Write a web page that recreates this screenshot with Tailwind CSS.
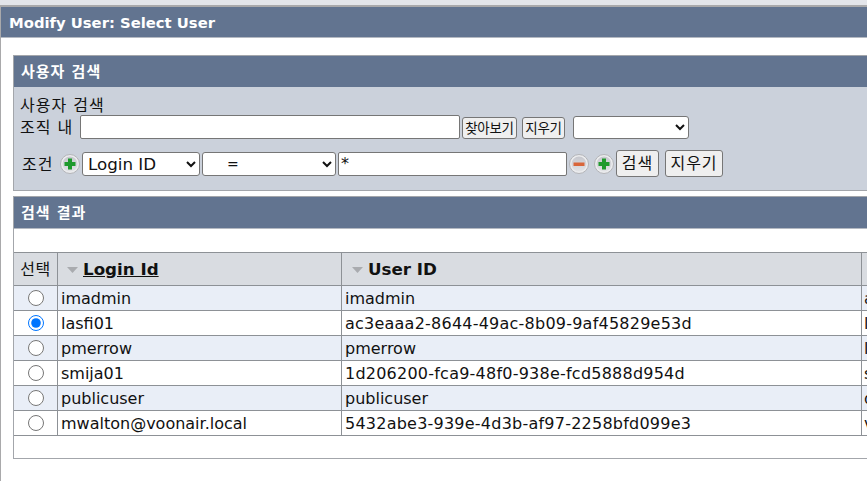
<!DOCTYPE html>
<html lang="ko">
<head>
<meta charset="utf-8">
<script src="https://cdn.jsdelivr.net/npm/@tailwindcss/browser@4"></script>
</head>
<body class="bg-white">
<div class="w-[867px] h-[481px] overflow-hidden bg-white text-[16px] leading-[19px] text-[#111] font-['DejaVu_Sans','Noto_Sans_CJK_KR',sans-serif]">
  <div class="h-[5px] bg-[#e3e5ea]"></div>
  <div class="w-[1000px] h-[476px] border-l border-t-2 border-[#a9a9ab] border-l-[#a9a9ab]">
    <div class="h-[31px] bg-[#627490] border-b border-[#b4b9c2] pl-2 pt-[1px] flex items-center text-white font-bold text-[14.800px]">Modify User: Select User</div>
    <div class="pl-3 pt-[17px]">
      <div class="border border-[#a3a6ab] border-r-0">
        <div class="h-[31px] bg-[#627490] pl-[7px] pt-[1px] flex items-center text-white font-bold text-[15px] tracking-[1px]">사용자 검색</div>
        <div class="h-[103px] bg-[#cbd1db] pl-[6px] pt-[8px]">
          <div class="text-[16px] leading-[20px] tracking-[1px] pt-[1px] h-[20px]">사용자 검색</div>
          <div class="flex items-center h-[24px]">
            <span class="text-[16px] tracking-[1px] w-[60px]">조직 내</span>
            <input type="text" class="w-[380px] h-[24px] bg-white border border-[#767676] rounded-[2px]">
            <button class="ml-[2px] mt-[2px] w-[55px] h-[22px] text-[13.500px] tracking-[-0.300px] bg-[#efefef] border border-[#767676] rounded-[3px]">찾아보기</button>
            <button class="ml-[5px] mt-[2px] w-[43px] h-[22px] text-[13.500px] tracking-[-0.300px] bg-[#efefef] border border-[#767676] rounded-[3px]">지우기</button>
            <select class="ml-[8px] w-[116px] h-[23px] bg-white border border-[#767676] rounded-[3px]"><option></option></select>
          </div>
          <div class="flex items-center h-[27px] mt-[11px]">
            <span class="text-[16px] tracking-[1px] w-[40px] pl-[2px] pt-[2px]">조건</span>
            <svg class="w-[20px] h-[20px] mr-[2px] mt-[1px]" viewBox="0 0 20 20"><defs><linearGradient id="g" x1="0" y1="0" x2="0" y2="1"><stop offset="0" stop-color="#c6c7cd"/><stop offset="1" stop-color="#e2e3e6"/></linearGradient></defs><circle cx="10" cy="10" r="9.500" fill="#ebecee" stroke="#b3b4b8"/><circle cx="10" cy="10" r="7.500" fill="url(#g)"/><path d="M8 4.500h4v3.500h3.500v4h-3.500v3.500h-4v-3.500h-3.500v-4h3.500z" fill="#1f9a2d"/></svg>
            <select class="w-[118px] h-[24px] pl-[1px] bg-white border border-[#767676] rounded-[3px] text-[16.700px]"><option>Login ID</option></select>
            <select class="ml-[2px] w-[134px] h-[24px] pl-[20px] bg-white border border-[#767676] rounded-[3px] text-[14px]"><option>=</option></select>
            <input type="text" value="*" class="ml-[2px] w-[229px] h-[24px] px-[2px] bg-white border border-[#767676] rounded-[2px] text-[16px]">
            <svg class="ml-[2px] w-[20px] h-[20px] mt-[1px]" viewBox="0 0 20 20"><circle cx="10" cy="10" r="9.500" fill="#ebecee" stroke="#b3b4b8"/><circle cx="10" cy="10" r="7.500" fill="url(#g)"/><rect x="4.500" y="8.500" width="11" height="3.500" fill="#d9663a"/></svg>
            <svg class="ml-[5px] w-[20px] h-[20px] mt-[1px]" viewBox="0 0 20 20"><circle cx="10" cy="10" r="9.500" fill="#ebecee" stroke="#b3b4b8"/><circle cx="10" cy="10" r="7.500" fill="url(#g)"/><path d="M8 4.500h4v3.500h3.500v4h-3.500v3.500h-4v-3.500h-3.500v-4h3.500z" fill="#1f9a2d"/></svg>
            <button class="ml-[2px] w-[43px] h-[27px] bg-[#efefef] border border-[#767676] rounded-[3px] text-[16px] tracking-[1px]">검색</button>
            <button class="ml-[6px] w-[58px] h-[27px] bg-[#efefef] border border-[#767676] rounded-[3px] text-[16px] tracking-[1px]">지우기</button>
          </div>
        </div>
      </div>
      <div class="mt-[5px] border border-[#a3a6ab] border-r-0 h-[263px]">
        <div class="h-[32px] bg-[#627490] border-b border-[#b4b9c2] pl-[7px] pt-[1px] flex items-center text-white font-bold text-[15px] tracking-[1px]">검색 결과</div>
        <div class="h-[24px] bg-white border-b border-[#8d9196]"></div>
        <div class="grid grid-cols-[44px_284px_520px_1fr]">
          <div class="h-[33px] bg-[#d9dce1] border-r border-b border-[#8d9196] flex items-center justify-center text-[16px] tracking-[0.500px]">선택</div>
          <div class="h-[33px] bg-[#d9dce1] border-r border-b border-[#8d9196] flex items-center pl-[9px] gap-[5px] font-bold text-[16.700px] pt-[1px]"><svg class="w-[11px] h-[6px]" viewBox="0 0 11 6"><path d="M0 0h11l-5.500 6z" fill="#a9abaf"/></svg><span class="underline">Login Id</span></div>
          <div class="h-[33px] bg-[#d9dce1] border-r border-b border-[#8d9196] flex items-center pl-[10px] gap-[5px] font-bold text-[16.700px] pt-[1px]"><svg class="w-[11px] h-[6px]" viewBox="0 0 11 6"><path d="M0 0h11l-5.500 6z" fill="#a9abaf"/></svg><span>User ID</span></div>
          <div class="h-[33px] bg-[#d9dce1] border-b border-[#8d9196]"></div>

          <div class="h-[25px] bg-[#e9eef7] border-r border-b border-[#8d9196] flex items-center justify-center"><input type="radio" name="u" class="w-[16px] h-[16px]"></div>
          <div class="h-[25px] bg-[#e9eef7] border-r border-b border-[#8d9196] flex items-center pl-[3px] pt-[1px]">imadmin</div>
          <div class="h-[25px] bg-[#e9eef7] border-r border-b border-[#8d9196] flex items-center pl-[3px] pt-[1px]">imadmin</div>
          <div class="h-[25px] bg-[#e9eef7] border-b border-[#8d9196] flex items-center pl-[2px] pt-[1px]">a</div>

          <div class="h-[25px] bg-white border-r border-b border-[#8d9196] flex items-center justify-center"><input type="radio" name="u" class="w-[16px] h-[16px]" checked></div>
          <div class="h-[25px] bg-white border-r border-b border-[#8d9196] flex items-center pl-[3px] pt-[1px]">lasfi01</div>
          <div class="h-[25px] bg-white border-r border-b border-[#8d9196] flex items-center pl-[3px] pt-[1px] tracking-[0.230px]">ac3eaaa2-8644-49ac-8b09-9af45829e53d</div>
          <div class="h-[25px] bg-white border-b border-[#8d9196] flex items-center pl-[2px] pt-[1px]">l</div>

          <div class="h-[25px] bg-[#e9eef7] border-r border-b border-[#8d9196] flex items-center justify-center"><input type="radio" name="u" class="w-[16px] h-[16px]"></div>
          <div class="h-[25px] bg-[#e9eef7] border-r border-b border-[#8d9196] flex items-center pl-[3px] pt-[1px]">pmerrow</div>
          <div class="h-[25px] bg-[#e9eef7] border-r border-b border-[#8d9196] flex items-center pl-[3px] pt-[1px]">pmerrow</div>
          <div class="h-[25px] bg-[#e9eef7] border-b border-[#8d9196] flex items-center pl-[2px] pt-[1px]">l</div>

          <div class="h-[25px] bg-white border-r border-b border-[#8d9196] flex items-center justify-center"><input type="radio" name="u" class="w-[16px] h-[16px]"></div>
          <div class="h-[25px] bg-white border-r border-b border-[#8d9196] flex items-center pl-[3px] pt-[1px]">smija01</div>
          <div class="h-[25px] bg-white border-r border-b border-[#8d9196] flex items-center pl-[3px] pt-[1px] tracking-[0.230px]">1d206200-fca9-48f0-938e-fcd5888d954d</div>
          <div class="h-[25px] bg-white border-b border-[#8d9196] flex items-center pl-[2px] pt-[1px]">s</div>

          <div class="h-[25px] bg-[#e9eef7] border-r border-b border-[#8d9196] flex items-center justify-center"><input type="radio" name="u" class="w-[16px] h-[16px]"></div>
          <div class="h-[25px] bg-[#e9eef7] border-r border-b border-[#8d9196] flex items-center pl-[3px] pt-[1px]">publicuser</div>
          <div class="h-[25px] bg-[#e9eef7] border-r border-b border-[#8d9196] flex items-center pl-[3px] pt-[1px]">publicuser</div>
          <div class="h-[25px] bg-[#e9eef7] border-b border-[#8d9196] flex items-center pl-[2px] pt-[1px]">d</div>

          <div class="h-[25px] bg-white border-r border-b border-[#8d9196] flex items-center justify-center"><input type="radio" name="u" class="w-[16px] h-[16px]"></div>
          <div class="h-[25px] bg-white border-r border-b border-[#8d9196] flex items-center pl-[3px] pt-[1px]">mwalton@voonair.local</div>
          <div class="h-[25px] bg-white border-r border-b border-[#8d9196] flex items-center pl-[3px] pt-[1px] tracking-[0.230px]">5432abe3-939e-4d3b-af97-2258bfd099e3</div>
          <div class="h-[25px] bg-white border-b border-[#8d9196] flex items-center pl-[2px] pt-[1px]">v</div>
        </div>
      </div>
    </div>
  </div>
</div>
</body>
</html>
